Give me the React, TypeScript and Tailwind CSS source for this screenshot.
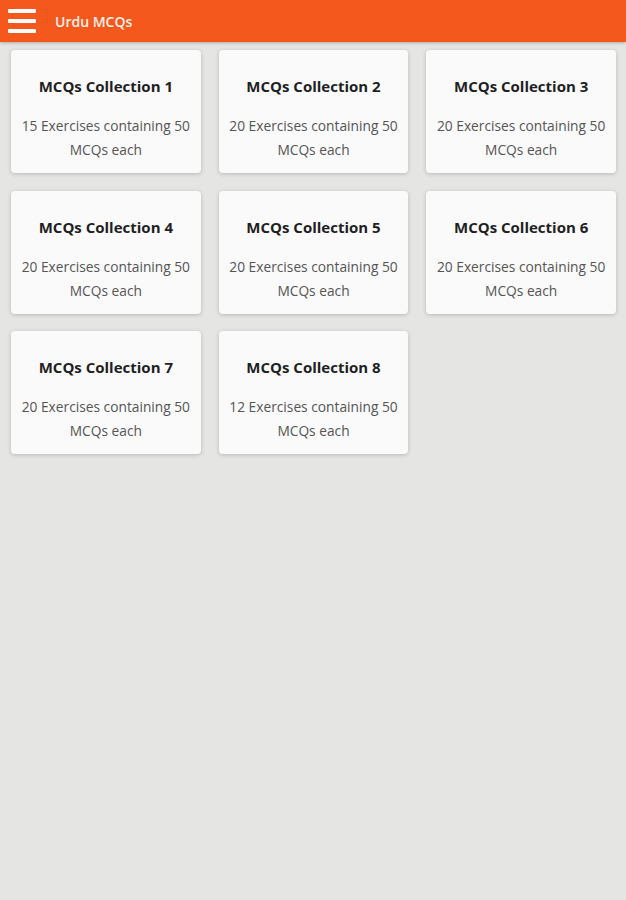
import React from "react";

const items = [
  { t: "MCQs Collection 1", d: "15 Exercises containing 50 MCQs each" },
  { t: "MCQs Collection 2", d: "20 Exercises containing 50 MCQs each" },
  { t: "MCQs Collection 3", d: "20 Exercises containing 50 MCQs each" },
  { t: "MCQs Collection 4", d: "20 Exercises containing 50 MCQs each" },
  { t: "MCQs Collection 5", d: "20 Exercises containing 50 MCQs each" },
  { t: "MCQs Collection 6", d: "20 Exercises containing 50 MCQs each" },
  { t: "MCQs Collection 7", d: "20 Exercises containing 50 MCQs each" },
  { t: "MCQs Collection 8", d: "12 Exercises containing 50 MCQs each" },
];

export default function App() {
  return (
    <div className="min-h-[900px] w-[626px] bg-[#e5e5e3]" style={{ fontFamily: "'Open Sans', 'Noto Sans', sans-serif" }}>
      <header className="h-[42px] bg-[#f4581c] flex items-center shadow-[0_1px_3px_rgba(0,0,0,0.25)]">
        <div className="ml-[8px] w-[28px] flex flex-col gap-[6px]">
          <div className="h-[4px] bg-white rounded-[1px]" />
          <div className="h-[4px] bg-white rounded-[1px]" />
          <div className="h-[4px] bg-white rounded-[1px]" />
        </div>
        <div className="ml-[19px] text-[14px] font-semibold text-[#fff1ea]">Urdu MCQs</div>
      </header>
      <div className="grid grid-cols-3 gap-x-[18px] gap-y-[17.5px] pl-[11px] pr-[10px] pt-[8px]">
        {items.map((it) => (
          <div key={it.t} className="h-[123px] bg-[#fafafa] rounded-[4px] shadow-[0_1px_4px_rgba(0,0,0,0.2)] flex flex-col items-center pt-[25px] text-center">
            <div className="text-[15px] leading-[22px] font-bold text-[#1f1f24]">{it.t}</div>
            <div className="mt-[17px] text-[13.75px] leading-[24px] text-[#555] px-[2px]">{it.d}</div>
          </div>
        ))}
      </div>
    </div>
  );
}
